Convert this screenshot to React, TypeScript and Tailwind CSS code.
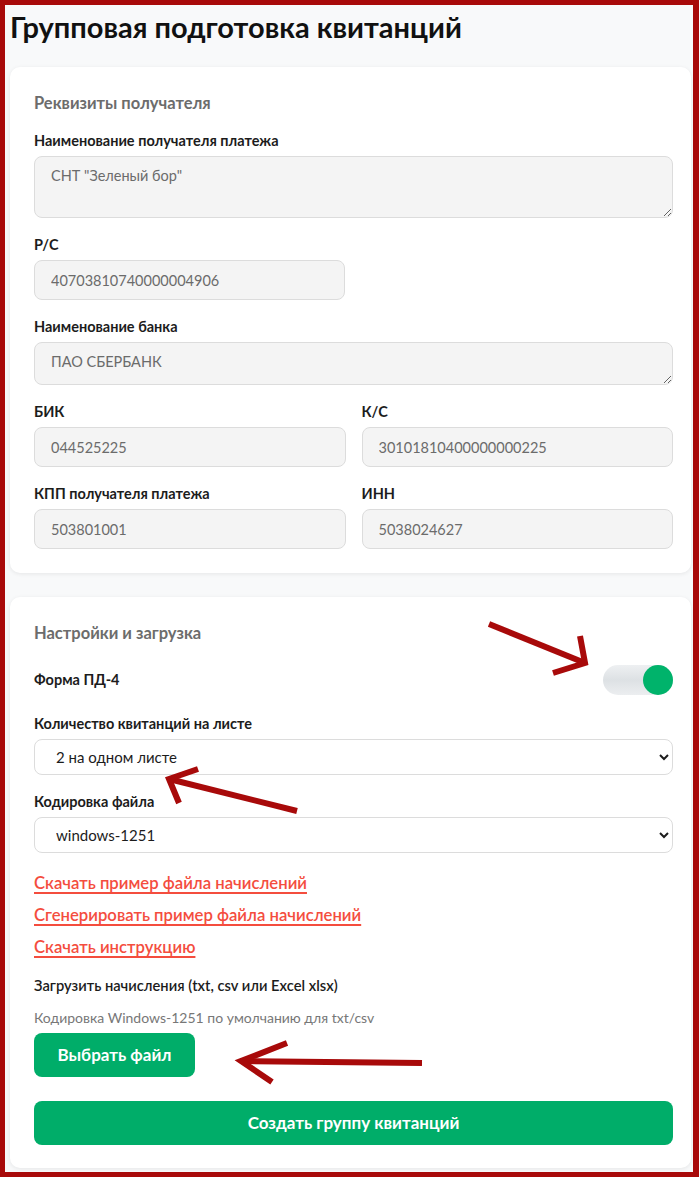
import type { ReactNode } from "react";

const font = { fontFamily: "Lato, 'Noto Sans', sans-serif" };

function Label({ children }: { children: ReactNode }) {
  return (
    <div className="mb-[5px] text-[14.5px] leading-5 font-bold text-[#1c1c1c]">
      {children}
    </div>
  );
}

function ReadonlyInput({ value }: { value: string }) {
  return (
    <input
      readOnly
      value={value}
      className="block h-10 w-full rounded-lg border border-[#dcdcdc] bg-[#f4f4f4] px-4 text-[14.5px] text-[#6b6b6b] outline-none"
    />
  );
}

function ReadonlyArea({ value, h }: { value: string; h: string }) {
  return (
    <textarea
      readOnly
      value={value}
      className={
        "block w-full rounded-lg border border-[#dcdcdc] bg-[#f4f4f4] px-4 pt-2 text-[14.5px] text-[#6b6b6b] outline-none " +
        h
      }
    />
  );
}

function Select({ options }: { options: string[] }) {
  return (
    <select className="block h-9 w-full rounded-lg border border-[#dcdcdc] bg-white px-[17px] text-[15px] text-[#1c1c1c] outline-none">
      {options.map((o) => (
        <option key={o}>{o}</option>
      ))}
    </select>
  );
}

// red annotation arrows drawn over the page
function Arrows() {
  return (
    <svg
      className="pointer-events-none absolute left-0 top-0"
      width="699"
      height="1177"
      viewBox="0 0 699 1177"
    >
      <g stroke="#a80a0a" strokeWidth="6" fill="none" strokeLinecap="butt">
        <path d="M484 619 L580 658" />
        <path d="M575 631 L580 658 L548 668" />
        <path d="M292 806 L164 774" />
        <path d="M193 764 L164 774 L174 798" />
        <path d="M417 1058 L236 1056" />
        <path d="M282 1038 L236 1056 L267 1077" />
      </g>
    </svg>
  );
}

export default function App() {
  return (
    <div
      className="relative min-h-[1177px] w-[699px] border-[5px] border-r-[6px] border-[#a80a0a] bg-[#f8f9fa]"
      style={font}
    >
      <div className="pl-[5px] pr-[2px] pt-[5px]">
        <h1 className="mb-[23px] text-[29px] leading-[34px] font-bold text-[#111]">
          Групповая подготовка квитанций
        </h1>

        <section className="rounded-[10px] bg-white pb-6 pl-6 pr-[18px] pt-6 shadow-[0_1px_4px_rgba(0,0,0,0.08)]">
          <h2 className="mb-4 text-[16.5px] leading-6 font-bold text-[#6c6c6c]">
            Реквизиты получателя
          </h2>
          <div className="flex flex-col gap-[17px]">
            <div>
              <Label>Наименование получателя платежа</Label>
              <ReadonlyArea value={'СНТ "Зеленый бор"'} h="h-[62px]" />
            </div>
            <div className="w-[311px]">
              <Label>Р/С</Label>
              <ReadonlyInput value="40703810740000004906" />
            </div>
            <div>
              <Label>Наименование банка</Label>
              <ReadonlyArea value="ПАО СБЕРБАНК" h="h-[43px]" />
            </div>
            <div className="grid grid-cols-2 gap-x-4 gap-y-[17px]">
              <div>
                <Label>БИК</Label>
                <ReadonlyInput value="044525225" />
              </div>
              <div>
                <Label>К/С</Label>
                <ReadonlyInput value="30101810400000000225" />
              </div>
              <div>
                <Label>КПП получателя платежа</Label>
                <ReadonlyInput value="503801001" />
              </div>
              <div>
                <Label>ИНН</Label>
                <ReadonlyInput value="5038024627" />
              </div>
            </div>
          </div>
        </section>

        <section className="mt-6 rounded-[10px] bg-white pb-[23px] pl-6 pr-[18px] pt-6 shadow-[0_1px_4px_rgba(0,0,0,0.08)]">
          <h2 className="mb-5 text-[16.5px] leading-6 font-bold text-[#6c6c6c]">
            Настройки и загрузка
          </h2>
          <div className="flex h-[30px] items-center justify-between">
            <span className="text-[14.5px] font-bold text-[#1c1c1c]">Форма ПД-4</span>
            <div className="relative h-[30px] w-[70px] rounded-full bg-gradient-to-b from-[#eef0f2] via-[#dde1e4] to-[#eceef0]">
              <div className="absolute right-0 top-0 h-[30px] w-[30px] rounded-full bg-[#00b36b]" />
            </div>
          </div>
          <div className="mt-[19px]">
            <Label>Количество квитанций на листе</Label>
            <Select options={["2 на одном листе", "1 на листе"]} />
          </div>
          <div className="mt-[17px]">
            <Label>Кодировка файла</Label>
            <Select options={["windows-1251", "utf-8"]} />
          </div>
          <div className="mt-[18px] flex flex-col items-start gap-2 text-[16.7px] leading-6 font-semibold text-[#f44d3e]">
            <a href="#" className="underline decoration-[1.5px] underline-offset-[3px]">
              Скачать пример файла начислений
            </a>
            <a href="#" className="underline decoration-[1.5px] underline-offset-[3px]">
              Сгенерировать пример файла начислений
            </a>
            <a href="#" className="underline decoration-[1.5px] underline-offset-[3px]">
              Скачать инструкцию
            </a>
          </div>
          <div className="mt-4 text-[14.7px] leading-5 font-semibold text-[#1c1c1c]">
            Загрузить начисления (txt, csv или Excel xlsx)
          </div>
          <div className="mt-[13px] text-[14px] leading-5 text-[#777]">
            Кодировка Windows-1251 по умолчанию для txt/csv
          </div>
          <button className="mt-[5px] h-11 w-[161px] rounded-lg bg-[#00ad69] text-[17px] font-bold text-white">
            Выбрать файл
          </button>
          <button className="mt-6 block h-11 w-full rounded-lg bg-[#00ad69] text-[17px] font-bold text-white">
            Создать группу квитанций
          </button>
        </section>
      </div>
      <Arrows />
    </div>
  );
}
